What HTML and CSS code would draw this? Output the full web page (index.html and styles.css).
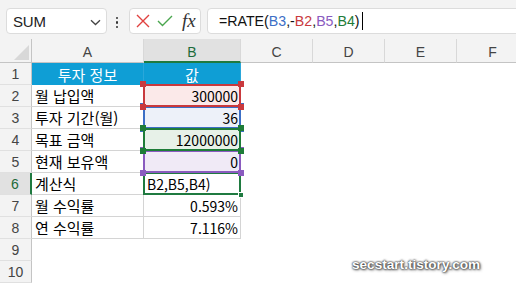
FILE: index.html
```html
<!DOCTYPE html>
<html lang="ko">
<head>
<meta charset="utf-8">
<link rel="stylesheet" href="styles.css">
</head>
<body>
<div class="app">
  <div class="toolbar">
    <div class="namebox">
      <span class="name">SUM</span>
      <svg class="chev" width="11" height="7" viewBox="0 0 11 7"><path d="M1 1.2 L5.5 5.5 L10 1.2" fill="none" stroke="#444" stroke-width="1.3"/></svg>
    </div>
    <div class="dots"><i></i><i></i><i></i></div>
    <div class="fxbox">
      <svg class="ico-x" width="14" height="14" viewBox="0 0 14 14"><path d="M1 1 L13 13 M13 1 L1 13" stroke="#e0413f" stroke-width="1.4" fill="none"/></svg>
      <svg class="ico-ok" width="16" height="12" viewBox="0 0 16 12"><path d="M1 6 L5.5 10.5 L15 1" stroke="#4aa64e" stroke-width="1.4" fill="none"/></svg>
      <span class="fx">fx</span>
    </div>
    <div class="formula"><span>=RATE(</span><span class="c-blue">B3</span><span>,-</span><span class="c-red">B2</span><span>,</span><span class="c-purple">B5</span><span>,</span><span class="c-green">B4</span><span>)</span><span class="caret"></span></div>
  </div>

  <div class="sheet">
    <div class="corner"><div class="tri"></div></div>
    <div class="ch">A</div>
    <div class="ch ch-sel">B</div>
    <div class="ch">C</div>
    <div class="ch">D</div>
    <div class="ch">E</div>
    <div class="ch">F</div>

    <div class="rh">1</div>
    <div class="cell hd">투자 정보</div>
    <div class="cell hd">값</div>
    <div></div><div></div><div></div><div></div>

    <div class="rh">2</div>
    <div class="cell t">월 납입액</div>
    <div class="cell t num ref r-red">300000<i class="sq tl"></i><i class="sq tr"></i><i class="sq bl"></i><i class="sq br"></i></div>
    <div></div><div></div><div></div><div></div>

    <div class="rh">3</div>
    <div class="cell t">투자 기간(월)</div>
    <div class="cell t num ref r-blue">36<i class="sq tl"></i><i class="sq tr"></i><i class="sq bl"></i><i class="sq br"></i></div>
    <div></div><div></div><div></div><div></div>

    <div class="rh">4</div>
    <div class="cell t">목표 금액</div>
    <div class="cell t num ref r-green">12000000<i class="sq tl"></i><i class="sq tr"></i><i class="sq bl"></i><i class="sq br"></i></div>
    <div></div><div></div><div></div><div></div>

    <div class="rh">5</div>
    <div class="cell t">현재 보유액</div>
    <div class="cell t num ref r-purple">0<i class="sq tl"></i><i class="sq tr"></i><i class="sq bl"></i><i class="sq br"></i></div>
    <div></div><div></div><div></div><div></div>

    <div class="rh rh-sel">6</div>
    <div class="cell t">계산식</div>
    <div class="cell t active">B2,B5,B4)<i class="handle"></i></div>
    <div></div><div></div><div></div><div></div>

    <div class="rh">7</div>
    <div class="cell t">월 수익률</div>
    <div class="cell t num">0.593%</div>
    <div></div><div></div><div></div><div></div>

    <div class="rh">8</div>
    <div class="cell t">연 수익률</div>
    <div class="cell t num">7.116%</div>
    <div></div><div></div><div></div><div></div>

    <div class="rh">9</div>
    <div></div><div></div><div></div><div></div><div></div><div></div>

    <div class="rh">10</div>
    <div></div><div></div><div></div><div></div><div></div><div></div>
  </div>

  <div class="watermark">secstart.tistory.com</div>
</div>
</body>
</html>
```

FILE: styles.css
```css
* { box-sizing: border-box; }
html, body { margin: 0; padding: 0; }
body { width: 516px; height: 286px; overflow: hidden; background: #fff; }

.app {
  position: relative;
  width: 516px;
  height: 286px;
  overflow: hidden;
  font-family: "Liberation Sans", Arial, sans-serif;
}

/* ---------- formula bar ---------- */
.toolbar {
  display: flex;
  align-items: flex-start;
  height: 39px;
  padding: 8px 0 0 6px;
  background: #f3f3f3;
  overflow: hidden;
}
.namebox {
  width: 101px;
  height: 26px;
  background: #fff;
  border: 1px solid #dcdcdc;
  border-radius: 4px;
  display: flex;
  align-items: center;
  padding: 0 5px 0 6px;
}
.name {
  flex: 1;
  font-size: 15px;
  color: #222;
  letter-spacing: -0.2px;
}
.chev { display: block; margin-top: 2px; }

.dots {
  width: 3px;
  margin: 9px 0 0 9px;
  display: flex;
  flex-direction: column;
  gap: 2px;
}
.dots i {
  display: block;
  width: 2.4px;
  height: 2.4px;
  border-radius: 50%;
  background: #333;
}

.fxbox {
  width: 72px;
  height: 26px;
  margin-left: 10px;
  background: #fff;
  border: 1px solid #dcdcdc;
  border-radius: 4px;
  display: flex;
  align-items: center;
  padding-left: 6px;
}
.ico-x { display: block; }
.ico-ok { display: block; margin-left: 7px; }
.fx {
  margin-left: 9px;
  font-family: "Liberation Serif", "Times New Roman", serif;
  font-style: italic;
  font-size: 19px;
  color: #333;
  line-height: 1;
  margin-top: -2px;
}

.formula {
  flex: 1;
  margin-left: 6px;
  margin-right: -12px;
  height: 26px;
  background: #fff;
  border: 1px solid #dcdcdc;
  border-radius: 4px;
  display: flex;
  align-items: center;
  padding-left: 11px;
  font-size: 14.2px;
  color: #111;
  white-space: nowrap;
}
.c-blue { color: #3c6fc6; }
.c-red { color: #c9393d; }
.c-purple { color: #8a5bbf; }
.c-green { color: #1e7c38; }
.caret {
  display: inline-block;
  width: 1px;
  height: 18px;
  background: #000;
  margin-left: 2px;
}

/* ---------- sheet ---------- */
.sheet {
  display: grid;
  grid-template-columns: 32px 112px 97px 72px 72px 72px 72px;
  grid-template-rows: 24px repeat(10, 22px);
  width: 529px;
}
.corner {
  background: #f3f3f3;
  border-right: 1px solid #c4c4c4;
  border-bottom: 1px solid #c4c4c4;
  display: flex;
  align-items: flex-end;
  justify-content: flex-end;
  padding: 0 2px 2px 0;
}
.tri {
  width: 15px;
  height: 15px;
  background: #d8d8d8;
  clip-path: polygon(100% 0, 100% 100%, 0 100%);
}
.ch {
  background: #f3f3f3;
  border-right: 1px solid #d8d8d8;
  border-bottom: 1px solid #c4c4c4;
  display: flex;
  align-items: center;
  justify-content: center;
  font-size: 14px;
  color: #444;
  padding-top: 2px;
}
.ch-sel {
  background: #e1e1e1;
  border-bottom: 2px solid #1f7a40;
  color: #1d6b3a;
  padding-top: 3px;
}
.rh {
  background: #f3f3f3;
  border-right: 1px solid #c4c4c4;
  border-bottom: 1px solid #e0e0e0;
  display: flex;
  align-items: center;
  justify-content: center;
  font-size: 14px;
  color: #444;
}
.rh-sel {
  background: #e1e1e1;
  border-right: 2px solid #1f7a40;
  color: #1d6b3a;
}

.cell {
  position: relative;
  display: flex;
  align-items: center;
  padding: 0 3px;
  font-family: "Noto Sans CJK KR", "Noto Sans", sans-serif;
  font-size: 15px;
  color: #000;
  white-space: nowrap;
}
.t {
  border-right: 1px solid #d4d4d4;
  border-bottom: 1px solid #d4d4d4;
}
.hd {
  background: #0f9ed5;
  color: #fff;
  justify-content: center;
  border-right: 1px solid #2aa7da;
}
.num {
  justify-content: flex-end;
  font-size: 14px;
  padding-right: 2px;
}

/* reference highlights (overlay) */
.ref::after {
  content: "";
  position: absolute;
  left: -1px;
  top: -1px;
  right: -1px;
  bottom: -1px;
  border: 2px solid currentColor;
}
.ref { color: #000; }
.ref::after, .sq { pointer-events: none; }
.r-red { background: #fbe9e9; }
.r-blue { background: #edf1f9; }
.r-green { background: #e7f1e8; }
.r-purple { background: #f0eaf6; }
.r-red::after { border-color: #c9393d; }
.r-blue::after { border-color: #3c6fc6; }
.r-green::after { border-color: #1e7c38; }
.r-purple::after { border-color: #8a5bbf; }
.r-red, .r-green { z-index: 4; }
.r-purple { z-index: 3; }
.r-blue { z-index: 2; }

.sq {
  position: absolute;
  width: 6px;
  height: 6px;
  z-index: 1;
}
.r-red .sq { background: #c9393d; }
.r-blue .sq { background: #3c6fc6; }
.r-green .sq { background: #1e7c38; }
.r-purple .sq { background: #8a5bbf; }
.sq.tl { left: -4px; top: -4px; }
.sq.tr { right: -4px; top: -4px; }
.sq.bl { left: -4px; bottom: -4px; }
.sq.br { right: -4px; bottom: -4px; }

.active {
  z-index: 1;
  font-size: 14px;
  padding-left: 3px;
}
.active::after {
  content: "";
  position: absolute;
  left: -1px;
  top: -1px;
  right: -1px;
  bottom: -1px;
  border: 2px solid #1f7a40;
}
.handle {
  position: absolute;
  right: -4px;
  bottom: -4px;
  width: 6px;
  height: 6px;
  background: #1f7a40;
  border: 1px solid #fff;
  z-index: 2;
}

/* watermark overlay */
.watermark {
  position: absolute;
  left: 352px;
  top: 257px;
  font-family: "Liberation Sans", Arial, sans-serif;
  font-weight: bold;
  font-size: 13.6px;
  color: #fff;
  text-shadow: 0 0 2px #3a3a3a, 0 0 2px #3a3a3a, 1px 1px 3px #555;
}
```
